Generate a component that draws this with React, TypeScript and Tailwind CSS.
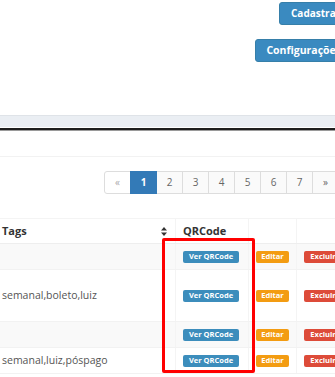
import React from 'react';

const rows = [
  { tags: '', h: 'h-[26px]', striped: true },
  { tags: 'semanal,boleto,luiz', h: 'h-[52px]', striped: false },
  { tags: '', h: 'h-[26px]', striped: true },
  { tags: 'semanal,luiz,póspago', h: 'h-[26px]', striped: false },
];

const pages = ['«', '1', '2', '3', '4', '5', '6', '7', '»'];

const SortIcon = () => (
  <svg width="6" height="9" viewBox="0 0 6 9" className="text-[#333]">
    <path d="M3 0 L6 3.5 L0 3.5 Z" fill="currentColor" />
    <path d="M3 9 L6 5.5 L0 5.5 Z" fill="currentColor" />
  </svg>
);

export default function App() {
  return (
    <div className="w-[335px] h-[377px] overflow-hidden bg-white" style={{ fontFamily: '"Open Sans", sans-serif' }}>
      <div className="w-[360px] relative">
        {/* top actions */}
        <div className="h-[115px] flex flex-col items-end pt-[2px] pr-[8px] gap-[14px]">
          <button className="h-[23px] w-[73px] px-[11px] text-left rounded-[3px] bg-[#3a8ac0] border border-[#367fa9] text-white text-[10px] font-bold">
            Cadastrar
          </button>
          <button className="h-[23px] px-[10px] rounded-[3px] bg-[#3a8ac0] border border-[#367fa9] text-white text-[10.5px] font-bold">
            Configurações
          </button>
        </div>
        <div className="h-[12px] bg-[#eaeef3] border-t border-[#dfe3e8]" />
        <div className="h-[1px] bg-white" />
        <div className="h-[2px] bg-[#1e1e1e]" />
        <div className="h-[1px] bg-[#9a9a9a]" />

        {/* box header */}
        <div className="h-[26px] border-b border-[#f2f2f2]" />

        {/* pagination */}
        <div className="flex justify-end pr-[21px] mt-[14px]">
          <div className="flex">
            {pages.map((p, i) => (
              <div
                key={p}
                className={`w-[27px] h-[23px] flex items-center justify-center text-[10px] border ${
                  i > 0 ? '-ml-px' : 'rounded-l-[3px]'
                } ${
                  p === '1'
                    ? 'bg-[#337ab7] border-[#337ab7] text-white font-bold relative z-10'
                    : p === '«'
                    ? 'bg-white border-[#ddd] text-[#aaa]'
                    : 'bg-[#fafafa] border-[#ddd] text-[#666]'
                }`}
              >
                {p}
              </div>
            ))}
          </div>
        </div>

        {/* table */}
        <div className="mt-[24px] border-t border-[#f4f4f4]">
          <div className="grid grid-cols-[176px_73px_48px_53px] h-[25px] border-b border-[#eee] text-[11px] font-bold text-[#333]">
            <div className="flex items-center justify-between pl-[2px] pr-[8px] border-r border-[#f4f4f4]">
              <span>Tags</span>
              <SortIcon />
            </div>
            <div className="flex items-center pl-[7px] border-r border-[#f4f4f4]">QRCode</div>
            <div className="border-r border-[#f4f4f4]" />
            <div />
          </div>
          {rows.map((r, i) => (
            <div
              key={i}
              className={`grid grid-cols-[176px_73px_48px_53px] ${r.h} border-b border-[#f2f2f2] ${r.striped ? 'bg-[#f9f9f9]' : 'bg-white'}`}
            >
              <div className="flex items-center pl-[2px] text-[10.5px] text-[#555] border-r border-[#f4f4f4]">{r.tags}</div>
              <div className="flex items-center pl-[7px] border-r border-[#f4f4f4]">
                <span className="h-[12px] w-[56px] flex items-center justify-center rounded-[2px] bg-[#3c8dbc] text-white text-[7.5px] font-bold">
                  Ver QRCode
                </span>
              </div>
              <div className="flex items-center pl-[7px] border-r border-[#f4f4f4]">
                <span className="h-[12px] w-[33px] flex items-center justify-center rounded-[2px] bg-[#f39c12] text-white text-[7.5px] font-bold">
                  Editar
                </span>
              </div>
              <div className="flex items-center pl-[7px]">
                <span className="h-[12px] w-[38px] flex items-center justify-center rounded-[2px] bg-[#dd4b39] text-white text-[7.5px] font-bold">
                  Excluir
                </span>
              </div>
            </div>
          ))}
        </div>

        {/* highlight box */}
        <div className="absolute left-[162px] top-[238px] w-[93px] h-[135px] border-[3px] border-[#ff0000] rounded-[2px]" />
      </div>
    </div>
  );
}
